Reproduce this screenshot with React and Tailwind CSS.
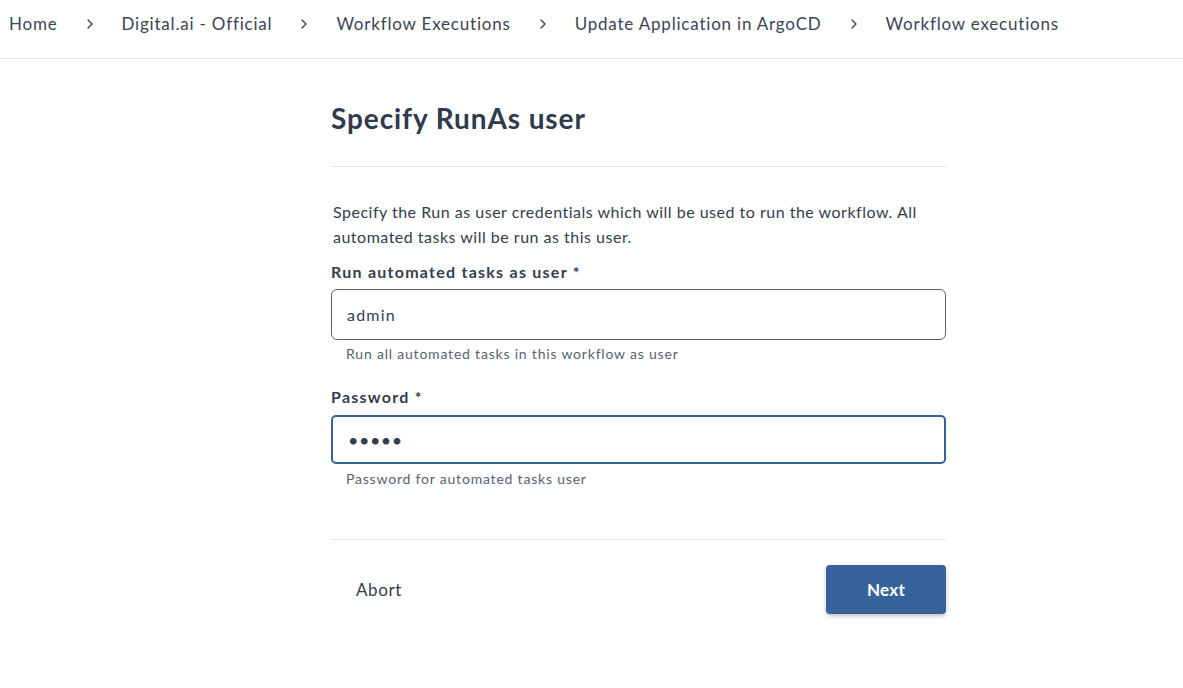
import { ChevronRight } from 'lucide-react';

export default function App() {
  const crumbs = [
    'Home',
    'Digital.ai - Official',
    'Workflow Executions',
    'Update Application in ArgoCD',
    'Workflow executions',
  ];

  return (
    <div className="min-h-[688px] bg-white text-[#333d4d]" style={{ fontFamily: 'Lato, "Open Sans", sans-serif' }}>
      {/* Breadcrumbs */}
      <nav className="h-[59px] border-b border-[#e3e4e8] flex items-center pl-[9px] pb-[10px] text-[17px] tracking-[0.8px]">
        {crumbs.map((c, i) => (
          <div key={c} className="flex items-center">
            <span className="text-[#3b4456]">{c}</span>
            {i < crumbs.length - 1 && (
              <ChevronRight className="w-[16px] h-[16px] mx-[24px] text-[#3b4456]" strokeWidth={2} />
            )}
          </div>
        ))}
      </nav>

      {/* Form */}
      <div className="w-[615px] ml-[331px]">
        <h1 className="text-[28px] font-bold leading-none tracking-[0.9px] pt-[45px] pb-[34px] border-b border-[#e3e4e8] text-[#2f3a4c]">
          Specify RunAs user
        </h1>

        <p className="mt-[32px] text-[16px] leading-[25px] pl-[2px] tracking-[0.5px] text-[#333d4d]">
          Specify the Run as user credentials which will be used to run the workflow. All automated tasks will be run as this user.
        </p>

        <label className="block mt-[13px] text-[16px] font-bold leading-[20px] tracking-[1.25px] text-[#333d4d]">
          Run automated tasks as user *
        </label>
        <div className="mt-[7px] h-[51px] border border-[#5b6270] rounded-[6px] flex items-center px-[15px] text-[16px] tracking-[1.2px] text-[#333d4d]">
          admin
        </div>
        <div className="mt-[5px] pl-[15px] text-[14px] leading-[18px] tracking-[0.8px] text-[#596273]">
          Run all automated tasks in this workflow as user
        </div>

        <label className="block mt-[24px] text-[16px] font-bold leading-[20px] tracking-[1.25px] text-[#333d4d]">
          Password *
        </label>
        <div className="mt-[8px] h-[49px] border-2 border-[#36629a] rounded-[5px] flex items-center px-[15px] text-[#333d4d]">
          <span className="tracking-[0.5px] text-[18px] leading-none">•••••</span>
        </div>
        <div className="mt-[6px] pl-[15px] text-[14px] leading-[18px] tracking-[0.8px] text-[#596273]">
          Password for automated tasks user
        </div>

        <div className="mt-[51px] border-t border-[#e3e4e8]" />

        <div className="mt-[25px] flex items-center justify-between">
          <button className="ml-[25px] text-[17px] tracking-[0.6px] text-[#333d4d]">Abort</button>
          <button className="w-[120px] h-[49px] rounded-[4px] bg-[#36629a] text-white text-[17px] font-bold tracking-[0.3px] shadow-[0_2px_4px_rgba(0,0,0,0.25)]">
            Next
          </button>
        </div>
      </div>
    </div>
  );
}
